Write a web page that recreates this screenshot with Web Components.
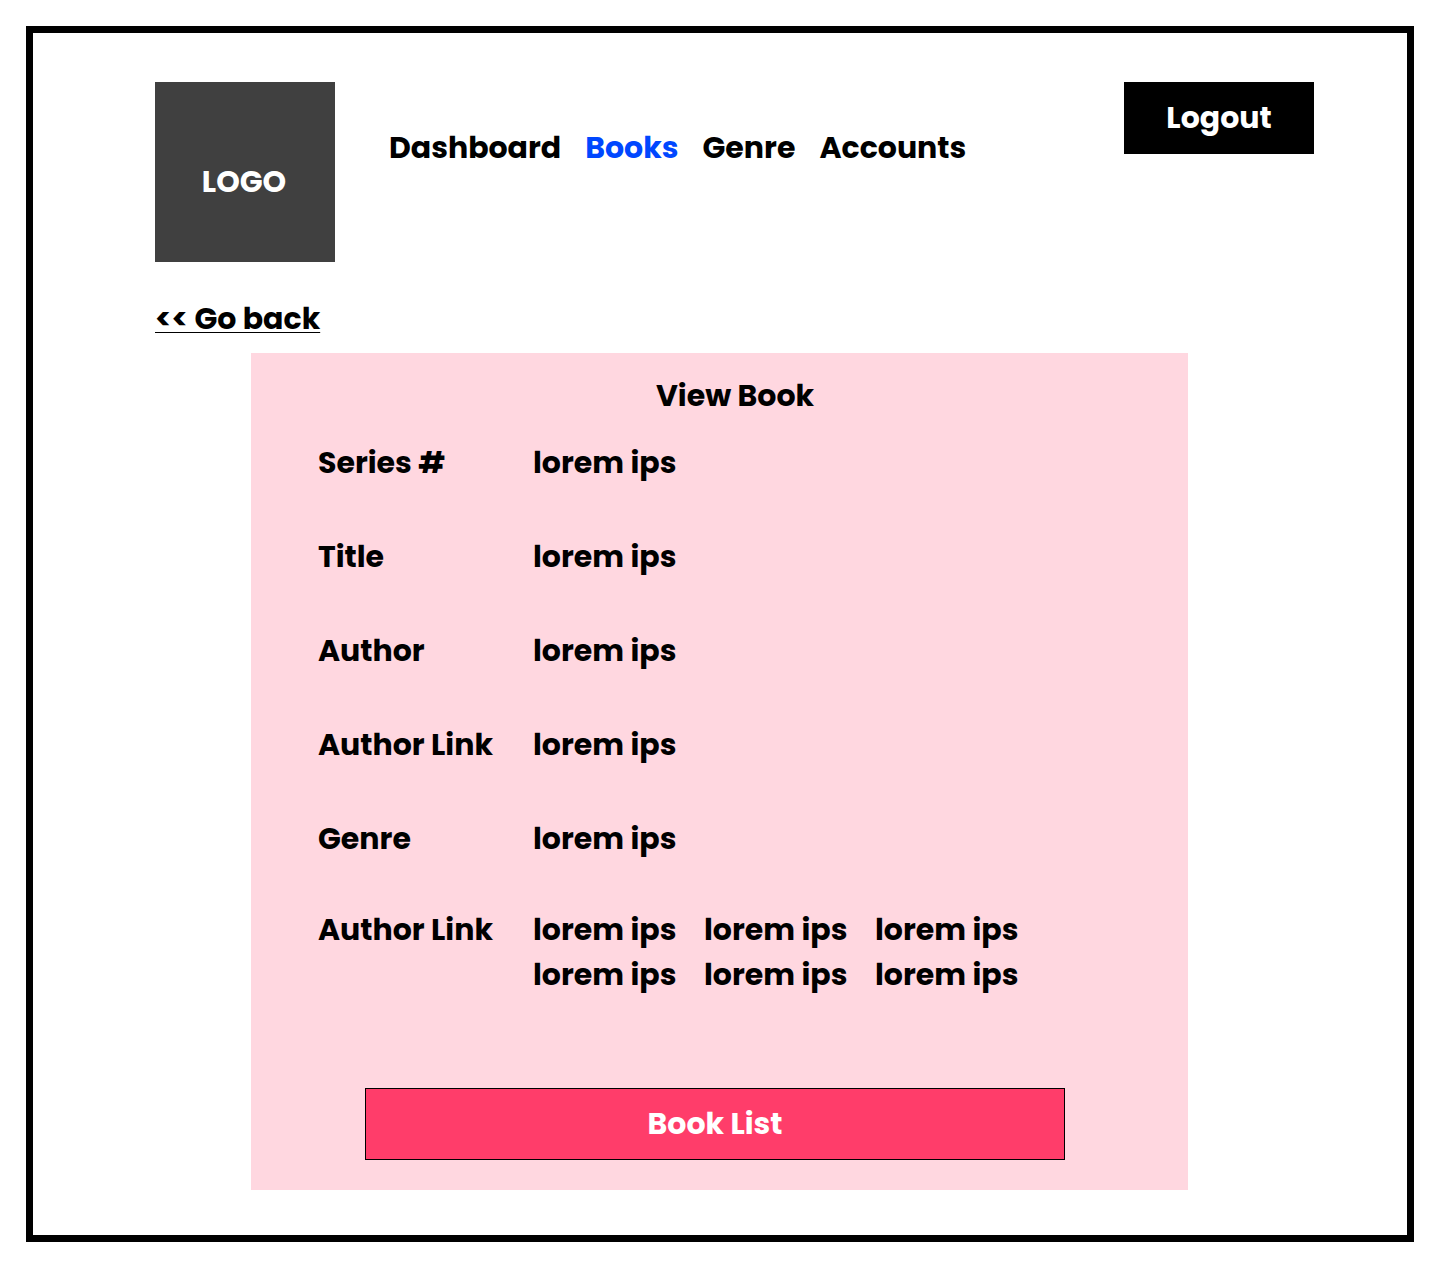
<!DOCTYPE html>
<html lang="en">
<head>
<meta charset="utf-8">
<meta name="viewport" content="width=device-width, initial-scale=1">
<title>View Book</title>
<style>
  body {
    margin: 0;
    background: #fff;
    color: #000;
    font: 700 30px/45px Poppins, Inter, "Open Sans", sans-serif;
  }
</style>
</head>
<body>
<app-frame>
  <app-header slot="header">
    <app-logo slot="logo">LOGO</app-logo>
    <nav-link href="#dashboard">Dashboard</nav-link>
    <nav-link href="#books" current>Books</nav-link>
    <nav-link href="#genre">Genre</nav-link>
    <nav-link href="#accounts">Accounts</nav-link>
    <action-button slot="action" variant="dark">Logout</action-button>
  </app-header>
  <back-link slot="back" href="#books">&lt;&lt; Go back</back-link>
  <book-card heading="View Book">
    <book-field label="Series #"><span>lorem ips</span></book-field>
    <book-field label="Title"><span>lorem ips</span></book-field>
    <book-field label="Author"><span>lorem ips</span></book-field>
    <book-field label="Author Link"><span>lorem ips</span></book-field>
    <book-field label="Genre"><span>lorem ips</span></book-field>
    <book-field slot="links" label="Author Link">
      <span>lorem ips</span><span>lorem ips</span><span>lorem ips</span>
      <span>lorem ips</span><span>lorem ips</span><span>lorem ips</span>
    </book-field>
    <action-button slot="action" variant="accent">Book List</action-button>
  </book-card>
</app-frame>

<script>
  class BaseElement extends HTMLElement {
    connectedCallback() {
      if (!this.shadowRoot) {
        this.attachShadow({ mode: "open" }).innerHTML = this.render();
      }
    }
  }

  customElements.define("app-frame", class extends BaseElement {
    render() {
      return `<style>
        :host { display: block; margin: 26px; border: 7px solid #000; padding: 49px 0 45px; }
        .top { padding: 0 93px 0 122px; }
        .back { margin: 34px 0 12px; display: flex; }
        main { margin: 0 219px 0 218px; }
      </style>
      <div class="top"><slot name="header"></slot><div class="back"><slot name="back"></slot></div></div>
      <main><slot></slot></main>`;
    }
  });

  customElements.define("app-header", class extends BaseElement {
    render() {
      return `<style>
        :host { display: block; }
        header { display: flex; align-items: flex-start; }
        nav { display: flex; gap: 24px; flex: 1; padding: 43px 0 0 54px; }
      </style>
      <header><slot name="logo"></slot><nav aria-label="Main"><slot></slot></nav><slot name="action"></slot></header>`;
    }
  });

  customElements.define("app-logo", class extends BaseElement {
    render() {
      return `<style>
        :host { display: flex; justify-content: center; box-sizing: border-box; flex: none;
          width: 180px; height: 180px; padding: 77px 2px 0 0; background: #404040; color: #fff; }
      </style><slot></slot>`;
    }
  });

  customElements.define("nav-link", class extends BaseElement {
    render() {
      const current = this.hasAttribute("current");
      return `<style>
        :host { display: block; }
        a { color: #000; text-decoration: none; }
        a[aria-current] { color: #0047ff; }
      </style><a href="${this.getAttribute("href")}"${current ? ' aria-current="page"' : ""}><slot></slot></a>`;
    }
  });

  customElements.define("back-link", class extends BaseElement {
    render() {
      return `<style>
        :host { display: block; }
        a { color: #000; text-decoration: underline from-font; text-underline-offset: 3px; text-decoration-skip-ink: none; }
      </style><a href="${this.getAttribute("href")}"><slot></slot></a>`;
    }
  });

  customElements.define("action-button", class extends BaseElement {
    render() {
      return `<style>
        :host { display: block; }
        :host([variant="dark"]) { width: 190px; --fill: #000; }
        :host([variant="accent"]) { --fill: #ff3d6a; }
        button { display: block; box-sizing: border-box; width: 100%; height: 72px; margin: 0; padding: 0 0 2px;
          border: 1px solid #000; border-radius: 0; background: var(--fill); color: #fff; font: inherit; cursor: pointer; }
      </style><button type="button"><slot></slot></button>`;
    }
  });

  customElements.define("book-card", class extends BaseElement {
    render() {
      return `<style>
        :host { display: block; padding: 20px 0 30px; background: #ffd7e0; }
        h1 { margin: 0 0 22px; padding-left: 31px; font: inherit; text-align: center; }
        .fields { display: flex; flex-direction: column; gap: 49px; }
        .fields, .links { padding-left: 67px; }
        .links { margin-top: 46px; }
        .action { margin: 91px 123px 0 114px; }
      </style>
      <h1>${this.getAttribute("heading")}</h1>
      <div class="fields"><slot></slot></div>
      <div class="links"><slot name="links"></slot></div>
      <div class="action"><slot name="action"></slot></div>`;
    }
  });

  customElements.define("book-field", class extends BaseElement {
    render() {
      return `<style>
        :host { display: block; }
        dl { display: grid; grid-template-columns: 215px 1fr; margin: 0; }
        dd { display: grid; grid-template-columns: repeat(3, 171px); margin: 0; }
      </style>
      <dl><dt>${this.getAttribute("label")}</dt><dd><slot></slot></dd></dl>`;
    }
  });
</script>
</body>
</html>
